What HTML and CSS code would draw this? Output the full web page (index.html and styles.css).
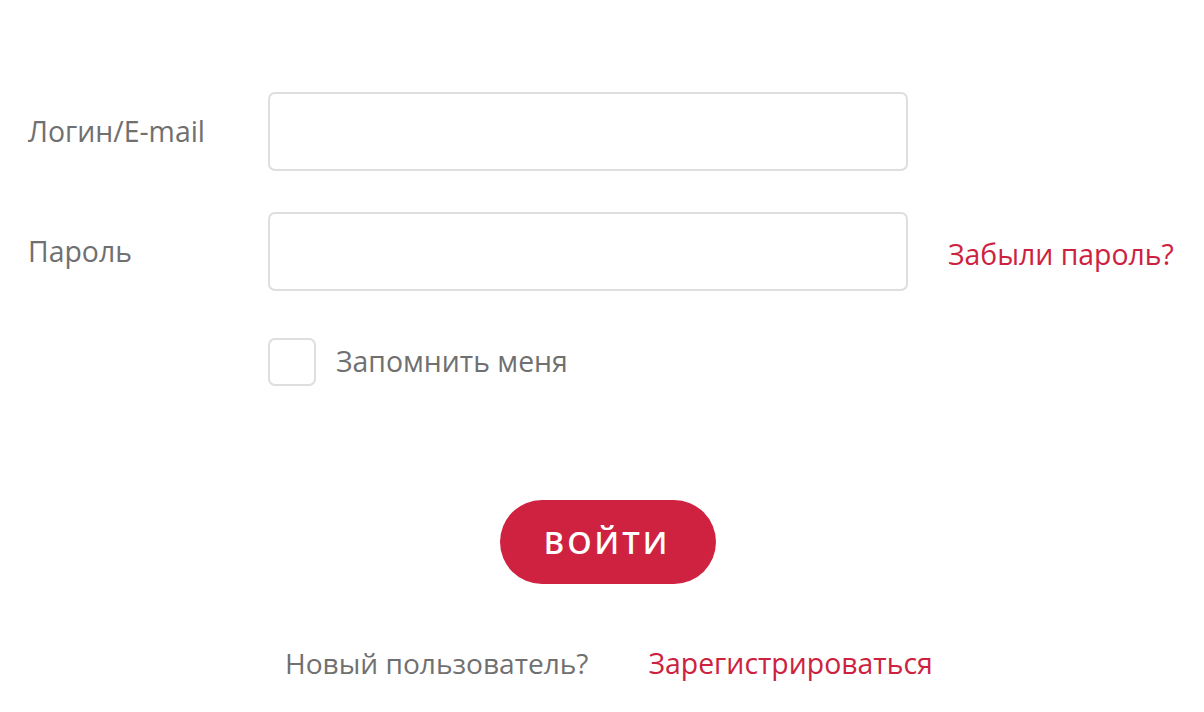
FILE: index.html
```html
<!DOCTYPE html>
<html lang="ru">
<head>
<meta charset="utf-8">
<link rel="stylesheet" href="styles.css">
</head>
<body>
<form class="login">
  <div class="row">
    <label class="label">Логин/E-mail</label>
    <input class="field" type="text">
    <span></span>
  </div>
  <div class="row">
    <label class="label">Пароль</label>
    <input class="field" type="password">
    <a class="link forgot" href="#">Забыли пароль?</a>
  </div>
  <div class="row remember">
    <span></span>
    <label class="check"><span class="box"></span><span class="check-text">Запомнить меня</span></label>
    <span></span>
  </div>
  <div class="actions">
    <button class="submit" type="button">ВОЙТИ</button>
  </div>
  <div class="register">
    <span class="muted">Новый пользователь?</span>
    <a class="link" href="#">Зарегистрироваться</a>
  </div>
</form>
</body>
</html>
```

FILE: styles.css
```css
* { box-sizing: border-box; }
html, body { margin: 0; background: #fff; }
body {
  font-family: "Open Sans", "Noto Sans", sans-serif;
  color: #707070;
  width: 1204px;
  height: 712px;
  overflow: hidden;
}
.login {
  padding: 92px 0 0 28px;
  display: flex;
  flex-direction: column;
}
.row {
  display: grid;
  grid-template-columns: 200px 640px auto;
  column-gap: 40px;
  align-items: center;
  margin-bottom: 41px;
}
.label {
  font-size: 28.4px;
  color: #707070;
  margin-top: -2px;
}
.field {
  width: 640px;
  height: 79px;
  border: 2px solid #dedede;
  border-radius: 7px;
  background: #fff;
  font: inherit;
  outline: none;
}
.link {
  color: #cc2240;
  text-decoration: none;
  font-size: 28.4px;
}
.forgot { margin-top: 4px; }
.remember { margin-top: 6px; margin-bottom: 0; }
.check {
  display: flex;
  align-items: center;
  gap: 20px;
}
.box {
  width: 48px;
  height: 48px;
  border: 2px solid #dedede;
  border-radius: 7px;
}
.check-text {
  font-size: 28.4px;
  margin-top: -2px;
}
.actions {
  display: flex;
  justify-content: center;
  margin-top: 114px;
  width: 1204px;
  margin-left: -28px;
  padding-left: 12px;
}
.submit {
  width: 216px;
  height: 84px;
  border: none;
  border-radius: 42px;
  background: #cf2240;
  color: #fff;
  font-family: "Open Sans", "Noto Sans", sans-serif;
  font-size: 31px;
  font-weight: 600;
  letter-spacing: 3px;
  padding: 0 2px 0 0;
}
.register {
  display: flex;
  gap: 60px;
  margin-top: 60px;
  margin-left: 257px;
  font-size: 28.1px;
}
.muted { color: #707070; }
```
